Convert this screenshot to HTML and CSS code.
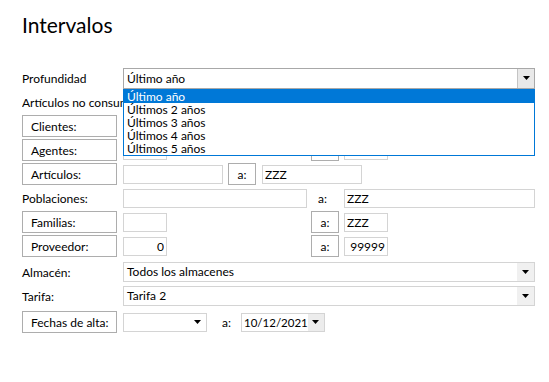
FILE: index.html
```html
<!DOCTYPE html>
<html lang="es">
<head>
    <meta charset="UTF-8">
    <meta name="viewport" content="width=device-width, initial-scale=1.0">
    <title>Intervalos</title>
    <link rel="stylesheet" href="styles.css">
</head>
<body>
    <h1 class="title">Intervalos</h1>

    <div class="form">
        <div class="row">
            <span class="label">Profundidad</span>
            <div class="combo combo-open">
                <span class="combo-value">Último año</span>
                <span class="combo-arrow"><svg width="7" height="4" viewBox="0 0 7 4"><polygon points="0,0 7,0 3.5,4" fill="#000"/></svg></span>
                <ul class="combo-list">
                    <li class="selected">Último año</li>
                    <li>Últimos 2 años</li>
                    <li>Últimos 3 años</li>
                    <li>Últimos 4 años</li>
                    <li>Últimos 5 años</li>
                </ul>
            </div>
        </div>

        <div class="row">
            <span class="label label-clip">Artículos no consumidos</span>
        </div>

        <div class="row">
            <button type="button" class="btn">Clientes:</button>
            <input type="text" class="field short">
            <button type="button" class="btn-a push">a:</button>
            <input type="text" class="field short">
        </div>

        <div class="row">
            <button type="button" class="btn">Agentes:</button>
            <input type="text" class="field short">
            <button type="button" class="btn-a push">a:</button>
            <input type="text" class="field short">
        </div>

        <div class="row">
            <button type="button" class="btn">Artículos:</button>
            <input type="text" class="field mid">
            <button type="button" class="btn-a near">a:</button>
            <input type="text" class="field mid" value="ZZZ">
        </div>

        <div class="row">
            <span class="label">Poblaciones:</span>
            <input type="text" class="field long">
            <span class="text-a">a:</span>
            <input type="text" class="field rest" value="ZZZ">
        </div>

        <div class="row">
            <button type="button" class="btn">Familias:</button>
            <input type="text" class="field short">
            <button type="button" class="btn-a push">a:</button>
            <input type="text" class="field short" value="ZZZ">
        </div>

        <div class="row">
            <button type="button" class="btn">Proveedor:</button>
            <input type="text" class="field short num" value="0">
            <button type="button" class="btn-a push">a:</button>
            <input type="text" class="field short num" value="99999">
        </div>

        <div class="row row-gap">
            <span class="label">Almacén:</span>
            <div class="combo combo-flat">
                <span class="combo-value">Todos los almacenes</span>
                <span class="combo-arrow"><svg width="7" height="4" viewBox="0 0 7 4"><polygon points="0,0 7,0 3.5,4" fill="#000"/></svg></span>
            </div>
        </div>

        <div class="row">
            <span class="label">Tarifa:</span>
            <div class="combo combo-flat">
                <span class="combo-value">Tarifa 2</span>
                <span class="combo-arrow"><svg width="7" height="4" viewBox="0 0 7 4"><polygon points="0,0 7,0 3.5,4" fill="#000"/></svg></span>
            </div>
        </div>

        <div class="row row-gap">
            <button type="button" class="btn">Fechas de alta:</button>
            <div class="date">
                <span class="date-value"></span>
                <span class="date-arrow"><svg width="7" height="4" viewBox="0 0 7 4"><polygon points="0,0 7,0 3.5,4" fill="#000"/></svg></span>
            </div>
            <span class="date-a">a:</span>
            <div class="date">
                <span class="date-value">10/12/2021</span>
                <span class="date-arrow hover"><svg width="7" height="4" viewBox="0 0 7 4"><polygon points="0,0 7,0 3.5,4" fill="#000"/></svg></span>
            </div>
        </div>
    </div>
</body>
</html>
```

FILE: styles.css
```css
* {
    margin: 0;
    padding: 0;
    box-sizing: border-box;
    font-family: 'Lato', sans-serif;
}

body {
    background: #ffffff;
    color: #000;
    padding: 0 14px 0 22px;
    font-size: 12px;
}

.title {
    margin-top: 12px;
    font-size: 21px;
    line-height: 26px;
    font-weight: 400;
    color: #000;
}

.form {
    margin-top: 28px;
    display: flex;
    flex-direction: column;
}

.row {
    display: flex;
    align-items: center;
    height: 24px;
}

.row > * {
    flex-shrink: 0;
}

.row-gap {
    margin-top: 2px;
}

.label {
    width: 101px;
}

.label-clip {
    white-space: nowrap;
    overflow: hidden;
}

.btn {
    width: 95px;
    height: 22px;
    margin-right: 6px;
    padding-left: 8px;
    border: 1px solid #adadad;
    background: #fff;
    font-size: 12px;
    color: #000;
    text-align: left;
}

.btn-a {
    width: 28px;
    height: 22px;
    border: 1px solid #adadad;
    background: #fff;
    font-size: 12px;
    color: #000;
}

.btn-a.push {
    margin-left: 144px;
    margin-right: 5px;
}

.btn-a.near {
    margin-left: 5px;
    margin-right: 6px;
}

.field {
    height: 19px;
    border: 1px solid #d4d4d4;
    padding: 0 2px;
    font-size: 12px;
    color: #000;
    background: #fff;
    outline: none;
}

.field.short { width: 44px; }
.field.mid { width: 100px; }
.field.long { width: 184px; }
.field.rest { width: 191px; }
.field.num { text-align: right; }

.text-a {
    width: 37px;
    padding-left: 11px;
}

.combo {
    position: relative;
    display: flex;
    width: 412px;
    height: 21px;
    border: 1px solid #a8a8a8;
    background: #fff;
}

.combo-value {
    flex: 1;
    padding-left: 3px;
    line-height: 19px;
}

.combo-arrow {
    width: 17px;
    display: flex;
    align-items: center;
    justify-content: center;
    background: #e9e9e9;
    border-left: 1px solid #c4c4c4;
}

.combo-flat {
    height: 20px;
    border-color: #d4d4d4;
}

.combo-flat .combo-value {
    line-height: 18px;
}

.combo-flat .combo-arrow {
    border-left: none;
    background: #f0f0f0;
}

.combo-list {
    position: absolute;
    top: 20px;
    left: -1px;
    width: 412px;
    height: 67px;
    list-style: none;
    border: 1px solid #0078d7;
    background: #fff;
    z-index: 2;
}

.combo-list li {
    height: 13px;
    line-height: 13px;
    padding-left: 3px;
}

.combo-list li.selected {
    background: #0078d7;
    color: #fff;
}

.date {
    display: flex;
    width: 84px;
    height: 19px;
    border: 1px solid #d4d4d4;
    background: #fff;
}

.date-value {
    flex: 1;
    padding-left: 2px;
    line-height: 17px;
    font-size: 11.5px;
}

.date-arrow {
    width: 18px;
    display: flex;
    align-items: center;
    justify-content: center;
}

.date-arrow.hover {
    background: #ececec;
}

.date-a {
    width: 34px;
    padding-left: 15px;
}
```
